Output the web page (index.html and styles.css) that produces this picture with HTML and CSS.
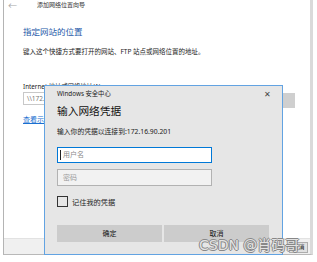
FILE: index.html
```html
<!DOCTYPE html>
<html lang="zh-CN">
<head>
    <meta charset="utf-8">
    <link rel="stylesheet" href="styles.css">
</head>
<body>
    <div class="window">
        <div class="titlebar">
            <span class="back">&#8592;</span>
            <span class="wiz-title">添加网络位置向导</span>
        </div>
        <div class="page">
            <div class="main-head">指定网站的位置</div>
            <div class="desc">键入这个快捷方式要打开的网站、FTP 站点或网络位置的地址。</div>
            <div class="label">Internet 地址或网络地址(A):</div>
            <div class="addr-row">
                <div class="addr">\\172.16.90.201</div>
                <div class="browse">浏览(R)...</div>
            </div>
            <div class="link">查看示例</div>
        </div>
        <div class="footer">
            <div class="foot-btn">取消</div>
        </div>
    </div>

    <div class="dialog">
        <div class="dlg-title">
            <span>Windows 安全中心</span>
            <span class="close">&#10005;</span>
        </div>
        <div class="dlg-head">输入网络凭据</div>
        <div class="dlg-msg">输入你的凭据以连接到:172.16.90.201</div>
        <div class="field active"><span class="caret"></span>用户名</div>
        <div class="field pwd">密码</div>
        <div class="remember">
            <span class="box"></span>
            <span>记住我的凭据</span>
        </div>
        <div class="buttons">
            <div class="btn">确定</div>
            <div class="btn">取消</div>
        </div>
    </div>

    <div class="watermark">CSDN @肖码哥</div>
</body>
</html>
```

FILE: styles.css
```css
body
{
    margin: 0;
    width: 317px;
    height: 262px;
    overflow: hidden;
    background: #ffffff;
    font-family: "Noto Sans", "Noto Sans CJK SC", sans-serif;
    color: #222;
    position: relative;
}
.window
{
    margin-left: 3px;
    width: 306px;
    height: 254px;
    border-left: 1px solid #b4b4b4;
    border-right: 3px solid #dadada;
    border-bottom: 1px solid #b8b8b8;
    display: flex;
    flex-direction: column;
    background: #fff;
}
.titlebar
{
    height: 11px;
    display: flex;
    align-items: center;
    font-size: 6px;
    line-height: 11px;
}
.back
{
    color: #a8a8a8;
    width: 29px;
    padding-left: 4px;
    font-size: 9px;
}
.wiz-title
{
    color: #333;
}
.page
{
    padding-left: 19px;
    display: flex;
    flex-direction: column;
}
.main-head
{
    margin-top: 14px;
    font-size: 8.5px;
    line-height: 14px;
    color: #2458a8;
}
.desc
{
    margin-top: 7px;
    font-size: 6.5px;
    line-height: 11px;
}
.label
{
    margin-top: 25px;
    font-size: 6.3px;
    line-height: 10px;
}
.addr-row
{
    display: flex;
    gap: 6px;
    align-items: flex-start;
}
.addr
{
    width: 209px;
    height: 13px;
    box-sizing: border-box;
    border: 1px solid #c8c8c8;
    font-size: 6.5px;
    line-height: 11px;
    padding-left: 3px;
    color: #777;
}
.browse
{
    margin-top: 1px;
    width: 57px;
    height: 15px;
    background: #cfcfcf;
    font-size: 6.5px;
    line-height: 15px;
    text-align: center;
}
.link
{
    margin-top: 6px;
    font-size: 7px;
    line-height: 11px;
    color: #1a6fd0;
    text-decoration: underline;
}
.footer
{
    margin-top: auto;
    height: 15px;
    background: #f0f0f0;
    border-top: 1px solid #e2e2e2;
    display: flex;
    justify-content: flex-end;
    align-items: flex-start;
    padding-right: 2px;
}
.foot-btn
{
    margin-top: 3px;
    width: 19px;
    height: 11px;
    box-sizing: border-box;
    border: 1px solid #adadad;
    background: #e1e1e1;
    font-size: 6px;
    line-height: 9px;
    text-align: center;
    overflow: hidden;
}
.dialog
{
    position: absolute;
    left: 44px;
    top: 85px;
    width: 212px;
    height: 168px;
    border: 1px solid #62a3e2;
    background: #e6e6e6;
    padding: 0 13px 0 12px;
    display: flex;
    flex-direction: column;
}
.dlg-title
{
    height: 15px;
    display: flex;
    justify-content: space-between;
    align-items: center;
    font-size: 6.3px;
    color: #222;
}
.close
{
    font-size: 8px;
    color: #444;
    margin-right: -2px;
}
.dlg-head
{
    height: 20px;
    font-size: 10.7px;
    line-height: 20px;
    color: #111;
}
.dlg-msg
{
    margin-top: 5px;
    height: 12px;
    font-size: 6.8px;
    line-height: 12px;
}
.field
{
    margin-top: 9px;
    width: 155px;
    height: 16px;
    box-sizing: border-box;
    border: 1px solid #0078d7;
    background: #fff;
    font-size: 7px;
    line-height: 14px;
    padding-left: 2px;
    color: #8a8a8a;
    display: flex;
    align-items: center;
}
.caret
{
    width: 1px;
    height: 10px;
    background: #222;
    margin-right: 2px;
}
.pwd
{
    margin-top: 6px;
    height: 17px;
    padding-left: 5px;
    border-color: #b2b2b2;
    background: #f2f2f2;
    color: #9a9a9a;
}
.remember
{
    margin-top: 10px;
    height: 11px;
    display: flex;
    align-items: center;
    gap: 4px;
    font-size: 7.2px;
}
.box
{
    width: 11px;
    height: 11px;
    box-sizing: border-box;
    border: 1px solid #333;
}
.buttons
{
    margin-top: 18px;
    display: flex;
    gap: 2px;
}
.btn
{
    width: 105px;
    height: 17px;
    background: #cccccc;
    font-size: 7px;
    line-height: 17px;
    text-align: center;
    color: #111;
}
.watermark
{
    position: absolute;
    left: 199px;
    top: 236px;
    font-family: "DejaVu Sans", "Noto Sans CJK SC", sans-serif;
    font-size: 14px;
    line-height: 18px;
    color: rgba(245, 245, 245, 0.85);
    text-shadow: 1px 0 0 #888, -1px 0 0 #888, 0 1px 0 #888, 0 -1px 0 #888;
}
```
